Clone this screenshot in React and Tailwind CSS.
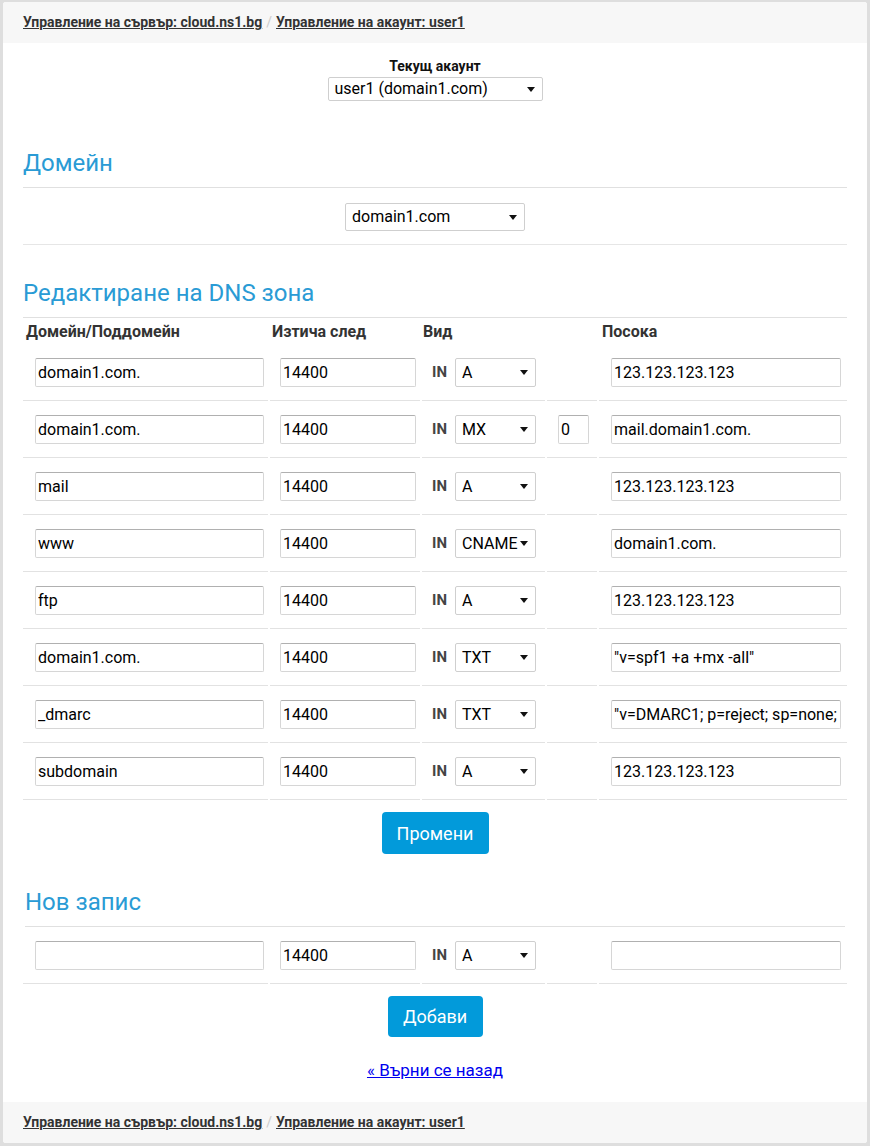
const HEADING = "#2a9bd5";
const BUTTON = "#029ada";

const rows = [
  { name: "domain1.com.", type: "A", value: "123.123.123.123" },
  { name: "domain1.com.", type: "MX", prio: "0", value: "mail.domain1.com." },
  { name: "mail", type: "A", value: "123.123.123.123" },
  { name: "www", type: "CNAME", value: "domain1.com." },
  { name: "ftp", type: "A", value: "123.123.123.123" },
  { name: "domain1.com.", type: "TXT", value: '"v=spf1 +a +mx -all"' },
  { name: "_dmarc", type: "TXT", value: '"v=DMARC1; p=reject; sp=none;' },
  { name: "subdomain", type: "A", value: "123.123.123.123" },
];

function Caret() {
  return (
    <svg width="8" height="5" viewBox="0 0 8 5" className="shrink-0">
      <path d="M0 0 L8 0 L4 5 Z" fill="#111" />
    </svg>
  );
}

function FakeSelect({ value, className }) {
  return (
    <div
      className={`flex items-center justify-between border border-[#cfcfcf] rounded-[2px] bg-white text-[16px] text-black pl-[6px] pr-[7px] ${className}`}
    >
      <span>{value}</span>
      <Caret />
    </div>
  );
}

function Field({ value, className }) {
  return (
    <input
      readOnly
      value={value}
      className={`h-[29px] border border-[#d6d6d6] border-t-[#b0b0b0] rounded-[2px] bg-white px-[2px] text-[16px] text-black outline-none font-[Roboto,sans-serif] ${className}`}
    />
  );
}

function Crumbs() {
  return (
    <div className="h-[41px] bg-[#f7f7f7] flex items-center px-5 text-[14px] font-bold text-[#333]">
      <a className="underline">Управление на сървър: cloud.ns1.bg</a>
      <span className="text-[#ccc] font-normal mx-[4px]">/</span>
      <a className="underline">Управление на акаунт: user1</a>
    </div>
  );
}

function Cell({ children, className = "" }) {
  return (
    <div className={`border-b border-[#e2e2e2] pt-[14px] pb-[13px] flex items-center ${className}`}>
      {children}
    </div>
  );
}

function RecordRow({ r }) {
  return (
    <>
      <Cell className="pl-[12px]">
        <Field value={r.name} className="w-[229px]" />
      </Cell>
      <Cell className="pl-[10px]">
        <Field value="14400" className="w-[136px]" />
      </Cell>
      <Cell className="pl-[10px]">
        <span className="text-[15px] font-bold text-[#444] w-[23px]">IN</span>
        <FakeSelect value={r.type} className="w-[81px] h-[29px]" />
      </Cell>
      <Cell className="pl-[11px]">
        {r.prio !== undefined && <Field value={r.prio} className="w-[31px]" />}
      </Cell>
      <Cell className="pl-[12px]">
        <Field value={r.value} className="w-[230px]" />
      </Cell>
    </>
  );
}

const GRID = "grid grid-cols-[245px_150px_123px_50px_248px] gap-x-[2px]";

export default function App() {
  return (
    <div className="bg-[#dedede] pt-[2px] px-[3px] pb-[3px] font-[Roboto,sans-serif] text-[#333]">
      <div className="bg-white rounded-[3px] overflow-hidden">
        <Crumbs />

        <div className="px-5">
          <div className="flex flex-col items-center mt-[15px]">
            <div className="text-[14px] font-bold text-[#111] leading-[17px]">Текущ акаунт</div>
            <FakeSelect value="user1 (domain1.com)" className="w-[215px] h-[24px] mt-[2px]" />
          </div>

          <h2 className="text-[24px] leading-[32px] mt-[46px] mb-[8px]" style={{ color: HEADING }}>
            Домейн
          </h2>
          <div className="border-t border-[#e0e0e0]" />
          <div className="flex justify-center pt-[15px] pb-[13px] border-b border-[#e6e6e6]">
            <FakeSelect value="domain1.com" className="w-[180px] h-[28px]" />
          </div>

          <h2 className="text-[24px] leading-[32px] mt-[32px] mb-[8px]" style={{ color: HEADING }}>
            Редактиране на DNS зона
          </h2>
          <div className="border-t border-[#e0e0e0]" />

          <div className={GRID}>
            <div className="pl-[3px] pt-[4px] pb-[2px] text-[16px] leading-[20px] font-bold">Домейн/Поддомейн</div>
            <div className="pl-[2px] pt-[4px] pb-[2px] text-[16px] leading-[20px] font-bold">Изтича след</div>
            <div className="pl-[1px] pt-[4px] pb-[2px] text-[16px] leading-[20px] font-bold">Вид</div>
            <div />
            <div className="pl-[3px] pt-[4px] pb-[2px] text-[16px] leading-[20px] font-bold">Посока</div>
            {rows.map((r, i) => (
              <RecordRow key={i} r={r} />
            ))}
          </div>

          <div className="flex justify-center mt-[12px]">
            <button
              className="w-[107px] h-[42px] rounded-[4px] text-white text-[18px]"
              style={{ background: BUTTON }}
            >
              Промени
            </button>
          </div>

          <h2 className="text-[24px] leading-[32px] mt-[32px] mb-[8px] mx-[2px]" style={{ color: HEADING }}>
            Нов запис
          </h2>
          <div className="border-t border-[#e0e0e0] mx-[2px]" />
          <div className={GRID}>
            <RecordRow r={{ name: "", type: "A", value: "" }} />
          </div>

          <div className="flex justify-center mt-[12px]">
            <button
              className="w-[95px] h-[41px] rounded-[4px] text-white text-[18px]"
              style={{ background: BUTTON }}
            >
              Добави
            </button>
          </div>

          <div className="flex justify-center mt-[23px] mb-[22px]">
            <a className="text-[17px] leading-[20px] text-[#0000ee] underline">« Върни се назад</a>
          </div>
        </div>

        <Crumbs />
      </div>
    </div>
  );
}
